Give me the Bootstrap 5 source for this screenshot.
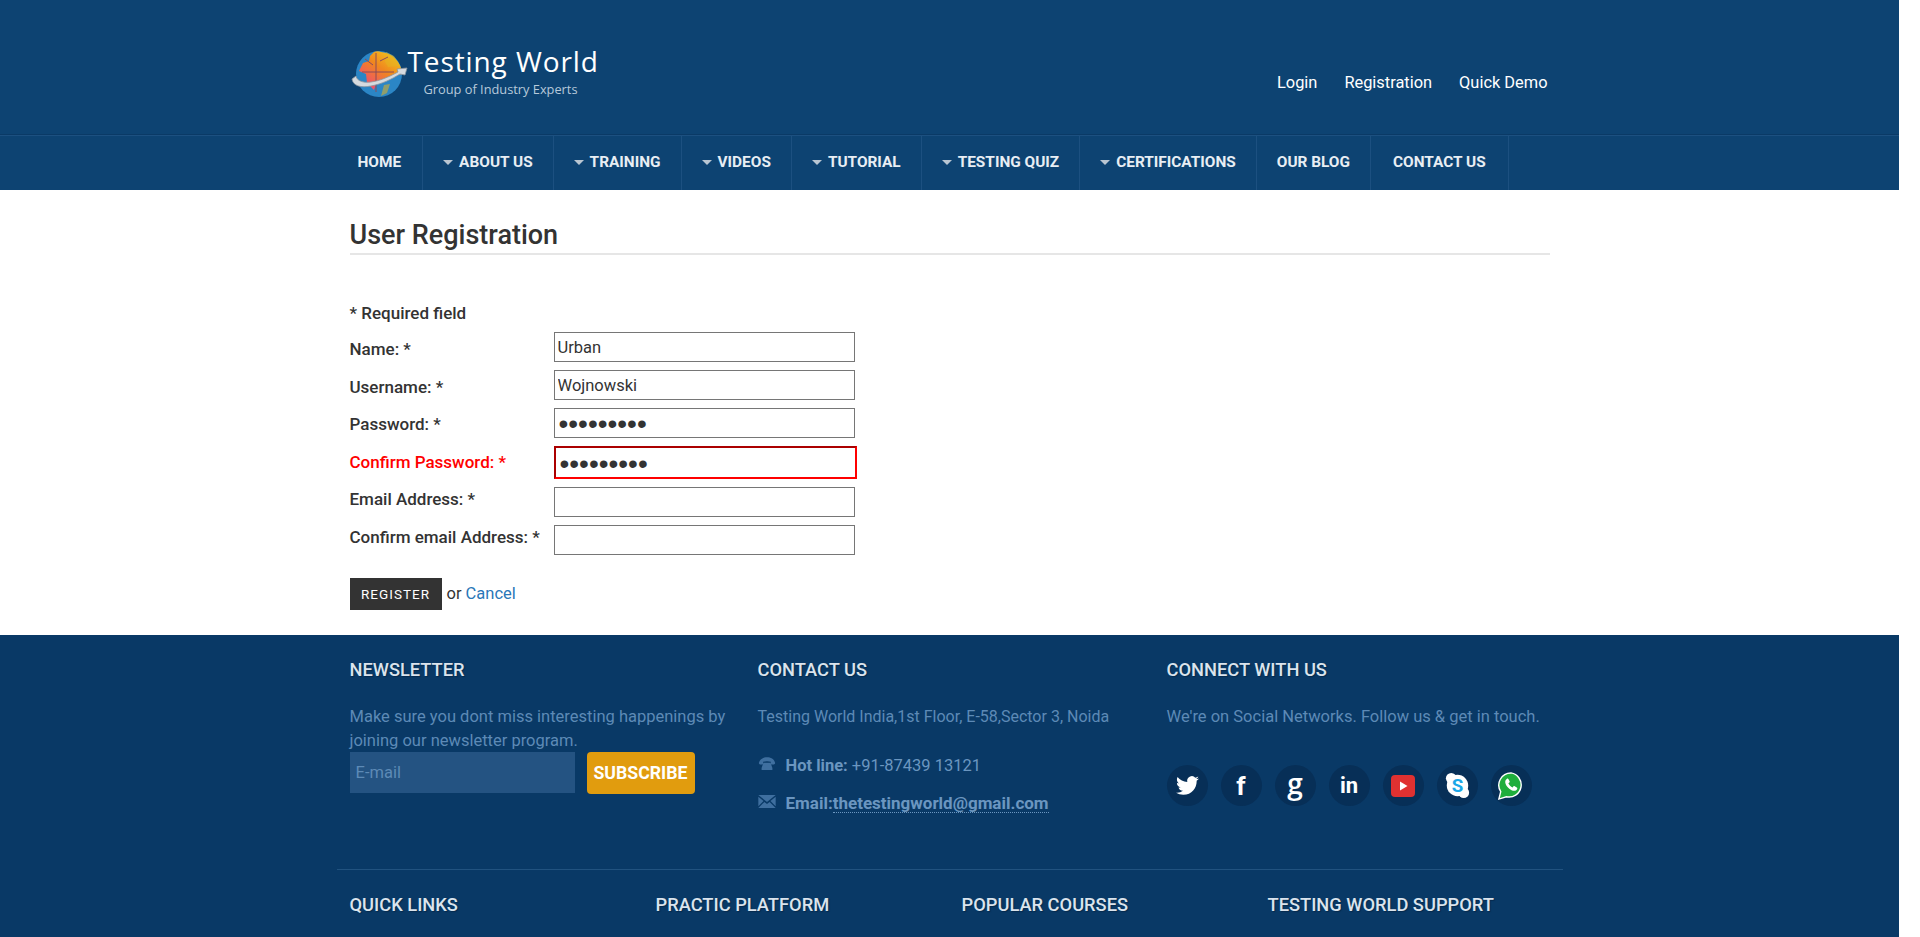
<!DOCTYPE html>
<html lang="en">
<head>
  <meta charset="UTF-8" />
  <meta name="viewport" content="width=device-width, initial-scale=1.0"/>
  <title>User Registration</title>
  <link href="https://cdn.jsdelivr.net/npm/bootstrap@5.3.0/dist/css/bootstrap.min.css" rel="stylesheet"/>
  <style>
    html { overflow: hidden; }
    body { font-family: Roboto, "Liberation Sans", sans-serif; font-size: 16.5px; color: #333; background: #fff; }
    .page-shell { width: 1899px; }
    .site-wrap { width: 1200px; margin: 0 auto; }

    .top-bar { background: #0d4372; height: 135px; border-bottom: 1px solid #0a3a66; }
    .logo-name { font-family: "Open Sans", sans-serif; font-size: 28px; line-height: 30px; color: #fff; letter-spacing: .9px; }
    .logo-sub { font-family: "Open Sans", sans-serif; font-size: 12.8px; line-height: 16px; color: #b7c9da; margin: 5px 0 0 16px; }
    .logo-box { margin-top: 14px; }
    .logo-text { margin: 0 0 5px -2px; }
    .top-links a { color: #fff; text-decoration: none; font-size: 16.4px; }
    .top-links { gap: 27px; padding-right: 2px; margin-top: 32px; }

    .main-nav { background: #0d4372; height: 55px; border-top: 1px solid #1c5080; padding: 0; }
    .main-nav .navbar-nav { height: 54px; }
    .main-nav .nav-item { border-right: 1px solid #1c5080; display: flex; align-items: center; padding: 0 20px; white-space: nowrap; }
    .main-nav .nav-item:first-child { padding: 0 21px 0 8px; }
    .main-nav .nav-item:last-child { padding: 0 22px; }
    .main-nav .navbar-nav .nav-link { color: #e8eef4; font-size: 15.4px; font-weight: 700; padding: 0; text-transform: uppercase; }
    .nav-arrow { display: inline-block; width: 0; height: 0; border: 5px solid transparent; border-top: 5px solid #b9c6d2; border-bottom: 0; margin-right: 6px; vertical-align: 2px; }

    .page-title { font-size: 27px; font-weight: 500; line-height: 30px; margin: 0; padding-top: 30px; border-bottom: 2px solid #e6e6e6; height: 65px; color: #333; }
    .req-note { font-size: 17px; font-weight: 500; margin: 46px 0 0; line-height: 24px; height: 30px; }
    .reg-labels { width: 204px; }
    .reg-lbl { display: block; height: 37.5px; line-height: 37.5px; font-size: 17px; font-weight: 500; white-space: nowrap; margin: 0; }
    .reg-lbl.bad { color: #f00; }
    .reg-inputs { gap: 8px; padding-top: 1px; }
    .reg-input { width: 301px; height: 30px; border: 1px solid #767676; border-radius: 0; padding: 2px 3px 1px; color: #333; font-size: 16.5px; }
    .reg-input[type=password] { font-family: "Liberation Sans", sans-serif; font-size: 28px; padding: 2px 4px 0; line-height: 1; }
    .reg-input.bad { width: 303px; height: 33px; border: 2px inset #f00; }
    .reg-submit { margin-top: 22px; gap: 5px; }
    .btn-register { background: #333; color: #fff; border: 0; border-radius: 0; font-size: 13.500px; letter-spacing: 1px; width: 92px; height: 32px; padding: 0; }
    .btn-register:hover { background: #333; color: #fff; }
    .cancel-link { color: #2a77b8; text-decoration: none; }

    .site-foot { background: #093966; height: 303px; margin-top: 25px; padding-top: 22px; }
    .foot-top { display: grid; grid-template-columns: 408px 409px 383px; height: 212px; }
    .foot-head { color: #dbe4ed; font-size: 18.3px; font-weight: 500; line-height: 26px; margin: 0; text-shadow: 1px 1px 1px #062a4d; text-transform: uppercase; }
    .foot-text { color: #5d8ab6; line-height: 24px; margin: 22px 0 -1px; width: 395px; }
    .foot-small { font-size: 16px; }
    .mail-input { width: 225px; height: 41px; background: #245382; border: 0; border-radius: 0; color: #fff; padding: 0 6px; font-size: 16.5px; }
    .mail-input::placeholder { color: #5d8ab6; opacity: 1; }
    .btn-sub { background: #e19c0e; color: #fff; border: 0; border-radius: 4px; font-size: 17.7px; font-weight: 700; width: 108px; height: 42px; padding: 0; }
    .btn-sub:hover { background: #e19c0e; color: #fff; }
    .sub-row { gap: 12px; }
    .contact-rows { margin-top: 26px; gap: 13px; color: #6b96c0; }
    .contact-row svg { width: 18px; flex: none; margin: 0 10px 4px 0; }
    .contact-row { line-height: 24px; height: 24px; }
    .contact-row b { font-weight: 700; }
    .contact-mail { font-size: 17px; }
    .contact-row a { color: inherit; text-decoration: none; font-weight: 700; border-bottom: 1px dotted #6b96c0; line-height: 18px; display: inline-block; }
    .social-row { gap: 13px; margin-top: 37px; }
    .social-dot { width: 41px; height: 41px; border-radius: 50%; background: #072f57; color: #fff; font-weight: 700; line-height: 1; }
    .glyph-f { font-size: 26px; }
    .glyph-g { font-family: "Open Sans", sans-serif; font-size: 28px; font-weight: 600; padding-bottom: 6px; }
    .glyph-in { font-size: 22px; }
    .foot-rule { border-top: 1px solid #21527f; margin: 0 -13px; height: 0; }
    .foot-bottom { display: grid; grid-template-columns: 306px 306px 306px 282px; padding-top: 22px; }
  </style>
</head>
<body>
<div class="page-shell">
  <header class="top-bar">
    <div class="site-wrap h-100 d-flex justify-content-between align-items-center">
      <a class="logo-box d-flex align-items-center text-decoration-none" href="#">
        <svg width="60" height="54" viewBox="0 0 60 54">
          <defs>
            <linearGradient id="globeFill" x1="0.1" y1="1" x2="0.9" y2="0">
              <stop offset="0" stop-color="#ee3f86"/>
              <stop offset=".55" stop-color="#f0871e"/>
              <stop offset="1" stop-color="#f2cf1c"/>
            </linearGradient>
          </defs>
          <circle cx="29" cy="27" r="23" fill="#2b86c6"/>
          <path d="M24 5c2-1 5-1 7 0a23 23 0 0 1 21 22l-14 3-4 5-7-1-3 9-7-7-1-9-7-3 4-8 6-2 1-5z" fill="url(#globeFill)"/>
          <path d="M36 5l8 4 6 10-12 1-3-5zM34 38l6-1-3 9-6 3z" fill="#e4b320" opacity=".55"/>
          <path d="M26 6v39M12 25h32M15 12l8 6M30 14l8-4" stroke="#8a4a5a" stroke-width="1" fill="none"/>
          <path d="M2 32c1 7 9 9 19 7 11-2 21-7 29-12l5 1 2-7-10 1 1 3c-9 5-19 9-27 10-8 1-14-1-15-6z" fill="#d5dadf" stroke="#8b95a0" stroke-width=".8"/>
        </svg>
        <div class="logo-text">
          <div class="logo-name">Testing World</div>
          <div class="logo-sub">Group of Industry Experts</div>
        </div>
      </a>
      <div class="top-links d-flex">
        <a href="#">Login</a>
        <a href="#">Registration</a>
        <a href="#">Quick Demo</a>
      </div>
    </div>
  </header>

  <nav class="navbar navbar-expand main-nav">
    <div class="site-wrap">
      <ul class="navbar-nav">
        <li class="nav-item"><a class="nav-link" href="#">Home</a></li>
        <li class="nav-item"><a class="nav-link" href="#"><span class="nav-arrow"></span>About us</a></li>
        <li class="nav-item"><a class="nav-link" href="#"><span class="nav-arrow"></span>Training</a></li>
        <li class="nav-item"><a class="nav-link" href="#"><span class="nav-arrow"></span>Videos</a></li>
        <li class="nav-item"><a class="nav-link" href="#"><span class="nav-arrow"></span>Tutorial</a></li>
        <li class="nav-item"><a class="nav-link" href="#"><span class="nav-arrow"></span>Testing Quiz</a></li>
        <li class="nav-item"><a class="nav-link" href="#"><span class="nav-arrow"></span>Certifications</a></li>
        <li class="nav-item"><a class="nav-link" href="#">Our Blog</a></li>
        <li class="nav-item"><a class="nav-link" href="#">Contact Us</a></li>
      </ul>
    </div>
  </nav>

  <main class="site-wrap">
    <h1 class="page-title">User Registration</h1>
    <p class="req-note">* Required field</p>
    <form onsubmit="return false">
      <div class="d-flex">
        <div class="reg-labels">
          <label class="reg-lbl" for="regName">Name: *</label>
          <label class="reg-lbl" for="regUser">Username: *</label>
          <label class="reg-lbl" for="regPass">Password: *</label>
          <label class="reg-lbl bad" for="regPass2">Confirm Password: *</label>
          <label class="reg-lbl" for="regMail">Email Address: *</label>
          <label class="reg-lbl" for="regMail2">Confirm email Address: *</label>
        </div>
        <div class="reg-inputs d-flex flex-column">
          <input class="form-control reg-input" id="regName" value="Urban"/>
          <input class="form-control reg-input" id="regUser" value="Wojnowski"/>
          <input class="form-control reg-input" id="regPass" type="password" value="123456789"/>
          <input class="form-control reg-input bad" id="regPass2" type="password" value="123456789"/>
          <input class="form-control reg-input" id="regMail"/>
          <input class="form-control reg-input" id="regMail2"/>
        </div>
      </div>
      <div class="reg-submit d-flex align-items-center">
        <button class="btn btn-register" type="submit">REGISTER</button>
        <span>or <a class="cancel-link" href="#">Cancel</a></span>
      </div>
    </form>
  </main>

  <footer class="site-foot">
    <div class="site-wrap">
      <div class="foot-top">
        <div>
          <h5 class="foot-head">Newsletter</h5>
          <p class="foot-text">Make sure you dont miss interesting happenings by joining our newsletter program.</p>
          <div class="d-flex sub-row">
            <input class="form-control mail-input" placeholder="E-mail"/>
            <button class="btn btn-sub" type="button">SUBSCRIBE</button>
          </div>
        </div>
        <div>
          <h5 class="foot-head">Contact Us</h5>
          <p class="foot-text foot-small">Testing World India,1st Floor, E-58,Sector 3, Noida</p>
          <div class="contact-rows d-flex flex-column">
            <div class="contact-row d-flex align-items-center">
              <svg height="15" viewBox="0 0 20 16"><path d="M1 6C2 2 6 0 10 0s8 2 9 6c.2 1-.5 2-1.500 2h-2c-.8 0-1.300-.6-1.300-1.400V5c-2.500-.9-6-.9-8.500 0v1.600C5.700 7.400 5.200 8 4.400 8h-2C1.500 8 .8 7 1 6z" fill="#3f6f9f"/><path d="M6 6h8l2 6v2H4v-2z" fill="#3f6f9f"/></svg>
              <span><b>Hot line:</b> +91-87439 13121</span>
            </div>
            <div class="contact-row contact-mail d-flex align-items-center">
              <svg height="13" viewBox="0 0 20 15"><path d="M0 0h20L10 8zM0 2l6 5-6 6zM20 2l-6 5 6 6zM7 8l3 2.500L13 8l7 7H0z" fill="#3f6f9f"/></svg>
              <span><b>Email:</b><a href="#">thetestingworld@gmail.com</a></span>
            </div>
          </div>
        </div>
        <div>
          <h5 class="foot-head">Connect With Us</h5>
          <p class="foot-text">We're on Social Networks. Follow us &amp; get in touch.</p>
          <div class="d-flex social-row">
            <a class="social-dot d-flex align-items-center justify-content-center text-decoration-none" href="#">
              <svg width="23" height="23" viewBox="0 0 24 24"><path fill="#fff" d="M23.953 4.57a10 10 0 01-2.825.775 4.958 4.958 0 002.163-2.723c-.951.555-2.005.959-3.127 1.184a4.92 4.92 0 00-8.384 4.482C7.69 8.095 4.067 6.13 1.64 3.162a4.822 4.822 0 00-.666 2.475c0 1.71.87 3.213 2.188 4.096a4.904 4.904 0 01-2.228-.616v.06a4.923 4.923 0 003.946 4.827 4.996 4.996 0 01-2.212.085 4.936 4.936 0 004.604 3.417 9.867 9.867 0 01-6.102 2.105c-.39 0-.779-.023-1.17-.067a13.995 13.995 0 007.557 2.209c9.053 0 13.998-7.496 13.998-13.985 0-.21 0-.42-.015-.63A9.935 9.935 0 0024 4.59z"/></svg>
            </a>
            <a class="social-dot glyph-f d-flex align-items-center justify-content-center text-decoration-none" href="#">f</a>
            <a class="social-dot glyph-g d-flex align-items-center justify-content-center text-decoration-none" href="#">g</a>
            <a class="social-dot glyph-in d-flex align-items-center justify-content-center text-decoration-none" href="#">in</a>
            <a class="social-dot d-flex align-items-center justify-content-center text-decoration-none" href="#">
              <svg width="24" height="22" viewBox="0 0 24 22"><rect width="24" height="22" rx="4" fill="#e03131"/><path d="M9 6.500l7.500 4.500L9 15.500z" fill="#fff"/></svg>
            </a>
            <a class="social-dot d-flex align-items-center justify-content-center text-decoration-none" href="#">
              <svg width="25" height="27" viewBox="0 0 28 30"><circle cx="14" cy="15" r="12" fill="#fff"/><circle cx="7" cy="7" r="6" fill="#fff"/><circle cx="21" cy="23" r="6" fill="#fff"/><text x="14" y="22" text-anchor="middle" font-family="Roboto, sans-serif" font-size="21" font-weight="700" fill="#1ba7e8">S</text></svg>
            </a>
            <a class="social-dot d-flex align-items-center justify-content-center text-decoration-none" href="#">
              <svg width="28" height="30" viewBox="0 0 30 32"><path d="M15 2a13 13 0 0 0-11 20L2 30l8-2.500A13 13 0 1 0 15 2z" fill="#1fae3c" stroke="#fff" stroke-width="1.500"/><path d="M10.500 8.500c-1.500 1-2 2.500-1.500 4.500 1 3.500 4.500 7 8 8 2 .5 3.500 0 4.500-1.500.5-.8.3-1.500-.3-1.900l-2.200-1.300c-.6-.3-1.100-.2-1.500.3l-.8 1c-2-.8-3.700-2.500-4.500-4.500l1-.8c.5-.4.6-.9.300-1.500l-1.300-2.200c-.4-.6-1.100-.8-1.700-.1z" fill="#fff"/></svg>
            </a>
          </div>
        </div>
      </div>
      <div class="foot-rule"></div>
      <div class="foot-bottom">
        <h5 class="foot-head">Quick Links</h5>
        <h5 class="foot-head">Practic Platform</h5>
        <h5 class="foot-head">Popular Courses</h5>
        <h5 class="foot-head">Testing World Support</h5>
      </div>
    </div>
  </footer>
</div>

  <script src="https://cdn.jsdelivr.net/npm/bootstrap@5.3.0/dist/js/bootstrap.bundle.min.js"></script>
</body>
</html>
